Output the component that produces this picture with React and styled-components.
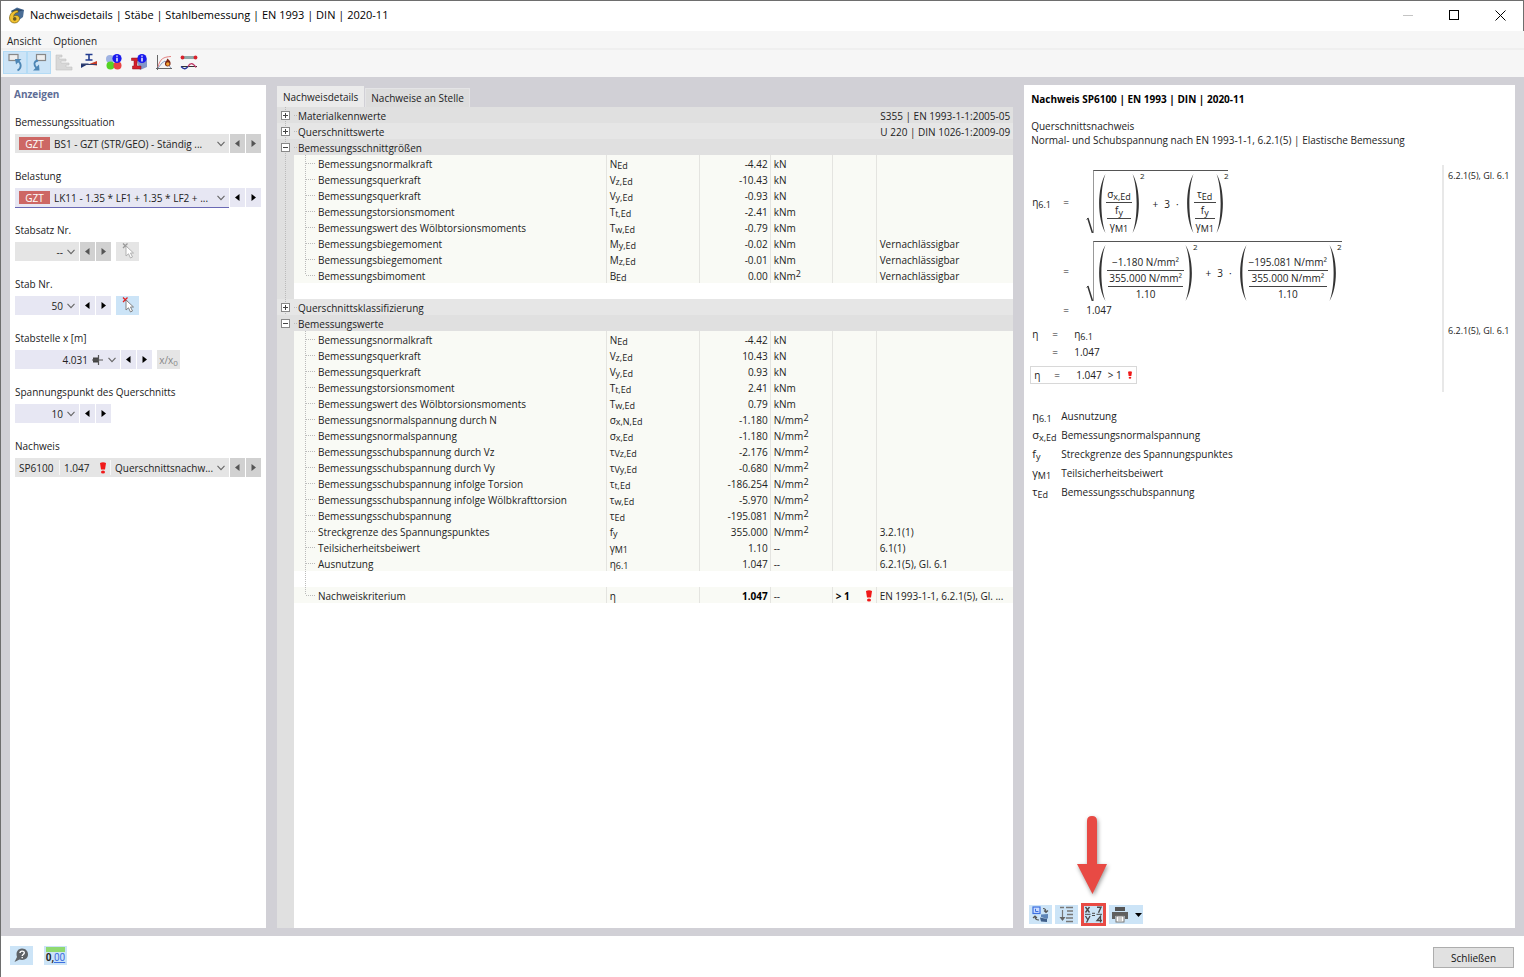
import React, { useState } from 'react';
import styled, { createGlobalStyle } from 'styled-components';

const GlobalStyle = createGlobalStyle`
    * { box-sizing: border-box; }
    body {
        margin: 0;
        background: #fff;
        color: #222;
        font-family: "Open Sans", "Noto Sans", sans-serif;
        font-size: 10px;
        line-height: 16px;
    }
    button, select, input { font: inherit; color: inherit; margin: 0; }
    button { border: 0; padding: 0; }
`;

/* ---------- icons ---------- */

const AppIcon = () => (
    <svg width="17" height="17" viewBox="0 0 17 17">
        <path d="M3 4 L9 0.5 L16 3 L15 10 L11 13 L5 8 Z" fill="#4a6d96" />
        <path d="M3 4 L9 2 L16 3 L10 5 Z" fill="#2f4b6e" />
        <path d="M10 3.5 C5 3 1.5 7 1.5 11 C1.5 14.5 4 16 6.5 16 C9.5 16 11.5 14 11.5 11.5 C11.5 8.500 8 7.500 5.500 9.500 C6 7 7.500 5.500 10 5.500 Z" fill="#f2c230" stroke="#7a6210" strokeWidth="0.7" />
        <circle cx="6.700" cy="11.900" r="1.800" fill="#6a5a20" />
    </svg>
);

const Marker = ({ size = 12 }) => (
    <svg width={size / 2} height={size} viewBox="0 0 6 12">
        <path d="M0 1 Q3 -0.500 6 1 L5 7.500 L1 7.500 Z" fill="#f01818" />
        <ellipse cx="3" cy="10" rx="2" ry="1.500" fill="#f01818" />
    </svg>
);

const Chevron = () => (
    <svg width="8" height="6" viewBox="0 0 8 6" fill="none" stroke="#666" strokeWidth="1.100">
        <path d="M0.500 0.800 L4 4.600 L7.500 0.800" />
    </svg>
);

const ArrowGlyph = ({ right }) => (
    <svg width="5" height="7" viewBox="0 0 5 7" fill="currentColor">
        <path d={right ? 'M0.500 0 L5 3.500 L0.500 7 Z' : 'M4.500 0 L0 3.500 L4.500 7 Z'} />
    </svg>
);

const PickIcon = ({ off }) => (
    <svg width="19" height="19" viewBox="0 0 19 19">
        <path d="M5 1.500 L9.500 6 M9.500 1.500 L5 6" stroke={off ? '#999' : '#e02020'} strokeWidth="1.300" />
        <path d="M8 4 L8 14 L10.500 11.800 L12.500 16 L14.500 15 L12.500 11 L15.500 11 Z" fill="#fff" stroke={off ? '#aaa' : '#777'} strokeWidth="0.900" />
    </svg>
);

const PositionIcon = () => (
    <svg width="12" height="12" viewBox="0 0 12 12">
        <rect x="1" y="3.500" width="5" height="5" fill="#444" />
        <path d="M0 6 H11 M6.500 1 V11" stroke="#555" strokeWidth="1.200" />
    </svg>
);

const BackIcon = () => (
    <svg width="20" height="20" viewBox="0 0 20 20" fill="none">
        <rect x="4" y="1.500" width="9" height="6" fill="#eee" stroke="#888" strokeWidth="1.200" />
        <path d="M12.500 17.500 C17 15 16.500 10 12.500 7.500" stroke="#4d86b5" strokeWidth="1.800" />
        <path d="M10 6 H16.500 L11 11.500 Z" fill="#4d86b5" />
    </svg>
);

const ForthIcon = () => (
    <svg width="20" height="20" viewBox="0 0 20 20" fill="none">
        <rect x="7.500" y="1.500" width="9" height="6" fill="#eee" stroke="#888" strokeWidth="1.200" />
        <path d="M9 7.500 C4.500 8.500 4.500 12 7.500 15" stroke="#4d86b5" strokeWidth="1.800" />
        <path d="M4 17.500 H10.500 L10 11.500 Z" fill="#4d86b5" />
    </svg>
);

const ListIcon = () => (
    <svg width="20" height="20" viewBox="0 0 20 20" fill="#d8d8d8" stroke="#c4c4c4" strokeWidth="0.600">
        <path d="M2 2 H8 V4 H5 V6 H12 V8 H7 V10 H15 V12 H12 V14 H18 V17 H2 Z" />
    </svg>
);

const SectionIcon = () => (
    <svg width="20" height="20" viewBox="0 0 20 20">
        <path d="M6.500 1.500 H13.500 M10 1.500 V7 M6.500 7 H13.500" stroke="#233c90" strokeWidth="1.600" />
        <path d="M2 10.500 H10 L2 15 Z" fill="#1f3470" />
        <path d="M9 11.500 L18 8 V12.500 Z" fill="#c83c28" />
        <path d="M2 11.500 H18" stroke="#33406e" />
    </svg>
);

const InfoBadge = ({ cx }) => (
    <g>
        <circle cx={cx} cy="5.500" r="4.600" fill="#1a1aee" />
        <path d={`M${cx} 2.500 V3.800 M${cx} 4.800 V8.500`} stroke="#fff" strokeWidth="1.400" />
    </g>
);

const ColoursIcon = () => (
    <svg width="20" height="20" viewBox="0 0 20 20">
        <circle cx="6" cy="6" r="4" fill="#9fb3e2" />
        <circle cx="6.500" cy="12.500" r="4" fill="#55d322" />
        <circle cx="13.500" cy="12.500" r="4" fill="#e84343" />
        <InfoBadge cx={13} />
    </svg>
);

const BeamIcon = () => (
    <svg width="20" height="20" viewBox="0 0 20 20">
        <path d="M7 6 L14 3 L18 6 V14 L11 17 Z" fill="#8498c8" />
        <path d="M2.500 5 H10 V7.500 H8 V13 H12 V16 H3.500 V13 H5 V7.500 H2.500 Z" fill="#d4202c" stroke="#8d0f19" strokeWidth="0.500" />
        <InfoBadge cx={13} />
    </svg>
);

const FireCurveIcon = () => (
    <svg width="20" height="20" viewBox="0 0 20 20" fill="none">
        <path d="M3.500 2 V17 M2 15.500 H18" stroke="#666" />
        <path d="M4 14 C6 6 9 4 17 3.500" stroke="#e58080" />
        <path d="M4 15 L8 10 L11 8 L17 15" stroke="#8aa0c4" />
        <path d="M13 5.500 C16 7 17 9 16.500 11.500 C15.500 14 11.500 14 11 11.500 C10.500 9.500 12 9 12 7.500 C12.500 8 13 7.500 13 5.500 Z" fill="#7d2a18" />
        <circle cx="13.800" cy="11" r="1.700" fill="#f5a432" />
    </svg>
);

const BucklingIcon = () => (
    <svg width="20" height="20" viewBox="0 0 20 20" fill="none">
        <path d="M3 4.500 H17" stroke="#8fa9a9" strokeWidth="3" />
        <circle cx="3.500" cy="4.500" r="1.900" fill="#d8222c" />
        <circle cx="16.500" cy="4.500" r="1.900" fill="#d8222c" />
        <path d="M2 13.500 H18" stroke="#333" />
        <path d="M2 13.500 C5 17 7 16 9 13.500" stroke="#27379a" strokeWidth="1.300" />
        <path d="M9 13.500 C11 9.500 14 9.500 17 14.500" stroke="#c03a68" strokeWidth="1.300" />
    </svg>
);

const SwapIcon = () => (
    <svg width="19" height="17" viewBox="0 0 19 17" fill="none">
        <rect x="2" y="1" width="7" height="6.500" fill="#c9dbff" stroke="#3c6fe0" strokeWidth="1.200" />
        <path d="M4.500 2.800 V5.500 H7.500" stroke="#3c6fe0" />
        <path d="M12 2.500 C14 2.500 15 3.500 15 6 M13 4.500 L15 6.500 L17 4.500" stroke="#555" strokeWidth="1.100" />
        <path d="M8 14 C5 14 4 13 4 10.500 M2 12 L4 10 L6 12" stroke="#555" strokeWidth="1.100" />
        <path d="M10 8.500 L17 8 V12 L16 13 L10 11 Z" fill="#5f86b8" />
        <path d="M9 11.500 L16 13 V16 L10 15.500 Z" fill="#3f5f8a" />
    </svg>
);

const OutlineIcon = () => (
    <svg width="19" height="17" viewBox="0 0 19 17" fill="none" stroke="#777">
        <path d="M3 1.500 H7 M9 1.500 H16 M10 5 H16 M10 8.500 H16 M9 12 H16 M9 15.500 H16" strokeWidth="1.300" />
        <path d="M5.500 4 V13" strokeWidth="1.200" />
        <path d="M2.500 11 H8.500 L5.500 15 Z" fill="#666" stroke="none" />
    </svg>
);

const FormulaIcon = () => (
    <svg width="19" height="17" viewBox="0 0 19 17" fill="none" stroke="#4a4a4a" strokeWidth="1.400">
        <path d="M1.500 1 L5.500 6.500 M5.500 1 L1.500 6.500" />
        <path d="M1.500 10 L3.700 13.500 M6 10 L2.500 16.500" />
        <path d="M1 8.300 H6.500 M8 7.300 H11 M8 9.500 H11 M12.500 8.300 H18" strokeWidth="1" />
        <path d="M13 1.300 H17 L14.500 6.800" />
        <path d="M16.500 16.500 V10.300 L13 14.500 H18" strokeWidth="1.300" />
    </svg>
);

const PrinterIcon = () => (
    <svg width="18" height="17" viewBox="0 0 18 17">
        <path d="M4 1 H14 V5 H4 Z" fill="#555" />
        <path d="M1 6 H17 V13 H14 V10 H4 V13 H1 Z" fill="#606060" />
        <rect x="5" y="10" width="8" height="6" fill="#fff" stroke="#777" />
        <path d="M7 12 H11 M7 14 H11" stroke="#999" />
    </svg>
);

const HelpIcon = () => (
    <svg width="17" height="17" viewBox="0 0 17 17">
        <path d="M1.500 15 L4 10 C2.500 5 5 1.500 9 1.500 C13 1.500 15 4.500 15 7.500 C15 11.500 11 14 6.500 12.500 Z" fill="#5e6266" />
        <path d="M7 6 C7 3.500 11.300 3.500 11.300 5.800 C11.300 7.500 9.200 7.500 9.200 9 M9.200 10 V11.300" fill="none" stroke="#fff" strokeWidth="1.400" />
    </svg>
);

const RedArrow = styled.svg`
    position: absolute;
    left: -7px;
    bottom: 29px;
    pointer-events: none;
    filter: drop-shadow(1px 2px 2px rgba(0, 0, 0, 0.4));
`;

/* ---------- window frame ---------- */

const Window = styled.div`
    min-height: 100vh;
    display: flex;
    flex-direction: column;
    border-left: 1px solid #6e6e6e;
    border-top: 1px solid #6e6e6e;
`;

const TitleBar = styled.header`
    display: flex;
    align-items: center;
    height: 30px;
    padding: 0 0 2px 7px;
    border-right: 1px solid #6e6e6e;
    color: #000;
`;

const Title = styled.h1`
    flex: 1;
    margin: 0 0 0 5px;
    font-size: 11px;
    font-weight: 400;
`;

const WindowButton = styled.button`
    display: flex;
    align-items: center;
    justify-content: center;
    width: 46px;
    height: 28px;
    background: none;
    color: ${props => props.$muted ? '#c4c4c4' : '#000'};
`;

const MenuBar = styled.nav`
    display: flex;
    gap: 12px;
    height: 19px;
    padding: 0 6px;
    background: #f6f6f6;
    border-bottom: 2px solid #efefef;
`;

const MenuItem = styled.button`
    height: 20px;
    background: none;
    color: #222;
`;

const ToolBar = styled.div`
    display: flex;
    align-items: center;
    height: 27px;
    padding: 0 2px 2px;
    background: #f6f6f6;
`;

const ToolButton = styled.button`
    display: flex;
    align-items: center;
    justify-content: center;
    width: ${props => props.$active ? '24px' : '25px'};
    height: 23px;
    background: ${props => props.$active ? '#cce4f7' : 'none'};
    border: 1px solid ${props => props.$active ? '#b4dbf5' : 'transparent'};
`;

const Workspace = styled.main`
    flex: 1;
    display: grid;
    grid-template-columns: 256px minmax(0, 3fr) minmax(0, 2fr);
    gap: 11px;
    padding: 8px 9px;
    background: #d1d0d6;
`;

const Panel = styled.section`
    display: flex;
    flex-direction: column;
    background: #fff;
    min-width: 0;
`;

const Footer = styled.footer`
    display: flex;
    align-items: center;
    height: 41px;
    padding: 0 10px 2px 9px;
    background: #fff;
`;

const FooterButton = styled.button`
    display: flex;
    align-items: center;
    justify-content: center;
    width: 23px;
    height: 19px;
    margin-right: 11px;
    background: #cce4f7;
`;

const UnitsMark = styled.span`
    border-top: 5px solid #8fd970;
    font: 700 10px/12px Roboto, sans-serif;
    color: #222;

    em {
        font-style: normal;
        font-weight: 400;
        color: #3c6fe0;
        text-decoration: underline;
    }
`;

const CloseButton = styled.button`
    width: 81px;
    height: 21px;
    margin: 4px 0 0 auto;
    background: #e1e1e1;
    border: 1px solid #adadad;
    color: #111;
`;

/* ---------- left column ---------- */

const PanelHeading = styled.h2`
    margin: 1px 0 12px 4px;
    font-size: 10px;
    color: #5e6d96;
`;

const Field = styled.div`
    height: 54px;
    padding: 0 5px;
`;

const FieldLabel = styled.label`
    display: block;
    margin-bottom: 4px;
`;

const FieldRow = styled.div`
    display: flex;
    gap: 1px;
    height: 19px;
`;

const Combo = styled.div`
    display: flex;
    align-items: center;
    gap: 4px;
    flex: ${props => props.$width ? 'none' : '1'};
    width: ${props => props.$width || 'auto'};
    min-width: 0;
    padding: 0 4px;
    background: ${props => props.$off ? '#e5e5e5' : '#e7e7f3'};
    box-shadow: ${props => props.$focused ? '0 1px 0 #6a69b4' : 'none'};

    svg { flex: none; }
`;

const Picker = styled.select`
    flex: 1;
    min-width: 0;
    height: 19px;
    padding: 0;
    border: 0;
    outline: 0;
    appearance: none;
    background: none;
    text-align-last: ${props => props.$right ? 'right' : 'left'};
    opacity: 1;
`;

const Badge = styled.span`
    flex: none;
    width: 31px;
    height: 13px;
    background: #cd6764;
    color: #fff;
    line-height: 14px;
    text-align: center;
`;

const ComboPart = styled.span`
    display: flex;
    align-items: center;
    justify-content: space-between;
    flex: none;
    width: ${props => props.$width};
    height: 15px;
    padding-right: 4px;
    border-right: 1px solid #f6f6f6;
`;

const StepButton = styled.button`
    display: flex;
    align-items: center;
    justify-content: center;
    width: 15px;
    background: ${props => props.disabled ? '#d1d1d1' : '#e7e7f3'};
    color: ${props => props.disabled ? '#555' : '#000'};
`;

const SideButton = styled.button`
    display: flex;
    align-items: center;
    justify-content: center;
    width: 23px;
    margin-left: 4px;
    background: ${props => props.disabled ? '#e5e5e5' : '#cce4f7'};
    color: #888;

    sub { font-size: 8px; line-height: 8px; padding-top: 6px; }
`;

/* ---------- middle column ---------- */

const Middle = styled.section`
    display: flex;
    flex-direction: column;
    min-width: 0;
`;

const Tabs = styled.div`
    display: flex;
    align-items: flex-end;
    gap: 1px;
    height: 22px;
`;

const Tab = styled.button`
    height: ${props => props.$active ? '21px' : '19px'};
    padding: 0 5px;
    background: ${props => props.$active ? '#ebebeb' : '#dddddd'};
    border: 1px solid ${props => props.$active ? '#ebebeb' : '#e4e4e6'};
    border-bottom: 0;
`;

const TreeArea = styled.div`
    flex: 1;
    background: linear-gradient(to right, #e0e0e0 17px, #fff 17px);
`;

const Tree = styled.table`
    width: 100%;
    table-layout: fixed;
    border-collapse: collapse;

    td, th {
        height: 16px;
        padding: 2px 3px 0;
        font-weight: 400;
        text-align: left;
        white-space: nowrap;
        line-height: 14px;
    }
`;

const GroupRow = styled.tr`
    background: ${props => props.$light ? '#e6e6e6' : '#e0e0e0'};
`;

const dots = dir => `repeating-linear-gradient(${dir}, #bbb 0 1px, transparent 1px 2px)`;

const Gutter = styled.td`
    && {
        padding: 0 0 0 4px;
        background: ${props => props.$line ? dots('to bottom') : 'none'} 8px 0 / 1px 16px no-repeat;
    }
`;

const GroupName = styled.th`
    && { padding-left: 4px; background: ${dots('to right')} 0 8px / 3px 1px no-repeat; }
`;

const Expander = styled.button`
    display: block;
    width: 9px;
    height: 9px;
    border: 1px solid #888;
    background:
        linear-gradient(#444, #444) center / 5px 1px no-repeat,
        linear-gradient(#444, #444) center / ${props => props.$open ? '0 0' : '1px 5px'} no-repeat,
        #fff;
`;

const DataRow = styled.tr`
    td, th { background-color: #f9faf5; }
    td:nth-child(n + 3) { border-left: 1px solid #e4e4e0; }
    td:first-child { background-color: #e0e0e0; }
`;

const BlankRow = styled.tr`
    td { background-color: #fff; }
    td:first-child { background-color: #e0e0e0; }
`;

const NameCell = styled.th`
    && {
        padding-left: 24px;
        background-image: ${dots('to bottom')}, ${dots('to right')};
        background-position: 11px 0, 12px 8px;
        background-size: 1px ${props => props.$last ? '8px' : '16px'}, 9px 1px;
        background-repeat: no-repeat;
    }
`;

const BlankName = styled.td`
    && {
        background-image: ${props => props.$line ? dots('to bottom') : 'none'};
        background-position: 11px 0;
        background-size: 1px 16px;
        background-repeat: no-repeat;
    }
`;

const NumberCell = styled.td`
    && { text-align: right; padding-right: 2px; font-weight: ${props => props.$bold ? 700 : 400}; color: ${props => props.$bold ? '#000' : '#222'}; }
`;

const StateCell = styled.td`
    && { font-weight: 700; }
    color: #000;

    svg { float: right; margin: 1px 1px 0 0; }
`;

const RightCell = styled.td`
    && { text-align: right; }
`;

const Low = styled.sub`
    font-size: 9px;
    line-height: 1px;
    vertical-align: -1px;
`;

const High = styled.sup`
    font-size: 9px;
    line-height: 1px;
    vertical-align: 3px;
`;

/* ---------- right column ---------- */

const SheetTitle = styled.h2`
    margin: 6px 7px 12px;
    font-size: 10px;
    color: #000;
`;

const SheetText = styled.p`
    margin: 0 7px;
    line-height: 14px;
`;

const Proof = styled.div`
    display: grid;
    grid-template-columns: minmax(0, 1fr) 73px;
    margin-top: 18px;
    color: #222;
`;

const Steps = styled.div`
    padding: 5px 0 1px 8px;
    min-width: 0;
`;

const Reference = styled.div`
    padding: 3px 0 0 4px;
    border-left: 2px solid #e8e8e8;
    font-size: 9px;
    white-space: nowrap;
`;

const Equation = styled.div`
    display: grid;
    grid-template-columns: ${props => props.$narrow ? '20px 22px' : '31px 23px'} 1fr;
    align-items: center;
    min-height: 18px;
    margin-bottom: ${props => props.$gap || '0'};
`;

const ResultBox = styled.div`
    display: inline-grid;
    grid-template-columns: 20px 22px auto;
    align-items: center;
    margin: 5px 0 7px -2px;
    padding: 0 4px 0 3px;
    border: 1px solid #d8d8d8;
`;

const Result = styled.span`
    display: flex;
    align-items: center;
    gap: 6px;
`;

const Small = styled.sub`
    font-size: 9px;
    line-height: 1px;
    vertical-align: -2px;
`;

const RootBox = styled.span`
    display: flex;
    align-items: flex-end;
`;

const RootBody = styled.span`
    display: flex;
    align-items: stretch;
    padding: 3px 0 0 5px;
    border-top: 1px solid #555;
    border-left: 1px solid #999;
`;

const Exponent = styled.span`
    margin-left: 1px;
    font-size: 8px;
    line-height: 4px;
`;

const Operator = styled.span`
    display: flex;
    gap: 6px;
    align-self: center;
    padding: 0 8px;
`;

const Fraction = styled.span`
    display: flex;
    flex-direction: column;
    align-items: center;
    justify-content: flex-end;
    padding: ${props => props.$wide ? '10px 1px 0' : '13px 0 0'};
    line-height: 14px;
`;

const Denominator = styled.span`
    display: flex;
    flex-direction: column;
    align-items: center;
    align-self: stretch;
    padding: 0 1px;
    border-top: 1px solid #444;
    white-space: nowrap;
`;

const Numerator = styled.span`
    padding: 0 1px 1px;
    white-space: nowrap;
`;

const Legend = styled.dl`
    display: grid;
    grid-template-columns: 29px 1fr;
    grid-auto-rows: 19px;
    align-items: center;
    margin: 14px 8px auto;

    dt { font-size: 11px; }
    dd { margin: 0; }
`;

const SheetTools = styled.div`
    display: flex;
    align-items: center;
    gap: 3px;
    padding: 0 5px 2px;
`;

const SheetButton = styled.button`
    position: relative;
    display: flex;
    align-items: center;
    justify-content: center;
    gap: 6px;
    width: ${props => props.$width || '23px'};
    height: ${props => props.$marked ? '23px' : '19px'};
    background: #cce4f7;
    border: ${props => props.$marked ? '3px solid #e84a44' : '0'};
`;

/* ---------- data ---------- */

const mm2 = <>N/mm<High>2</High></>;

const internalForces = [
    ['Bemessungsnormalkraft', 'N', 'Ed', '-4.42', 'kN'],
    ['Bemessungsquerkraft', 'V', 'z,Ed', '-10.43', 'kN'],
    ['Bemessungsquerkraft', 'V', 'y,Ed', '-0.93', 'kN'],
    ['Bemessungstorsionsmoment', 'T', 't,Ed', '-2.41', 'kNm'],
    ['Bemessungswert des Wölbtorsionsmoments', 'T', 'w,Ed', '-0.79', 'kNm'],
    ['Bemessungsbiegemoment', 'M', 'y,Ed', '-0.02', 'kNm', 'Vernachlässigbar'],
    ['Bemessungsbiegemoment', 'M', 'z,Ed', '-0.01', 'kNm', 'Vernachlässigbar'],
    ['Bemessungsbimoment', 'B', 'Ed', '0.00', <>kNm<High>2</High></>, 'Vernachlässigbar'],
];

const designValues = [
    ['Bemessungsnormalkraft', 'N', 'Ed', '-4.42', 'kN'],
    ['Bemessungsquerkraft', 'V', 'z,Ed', '10.43', 'kN'],
    ['Bemessungsquerkraft', 'V', 'y,Ed', '0.93', 'kN'],
    ['Bemessungstorsionsmoment', 'T', 't,Ed', '2.41', 'kNm'],
    ['Bemessungswert des Wölbtorsionsmoments', 'T', 'w,Ed', '0.79', 'kNm'],
    ['Bemessungsnormalspannung durch N', 'σ', 'x,N,Ed', '-1.180', mm2],
    ['Bemessungsnormalspannung', 'σ', 'x,Ed', '-1.180', mm2],
    ['Bemessungsschubspannung durch Vz', 'τ', 'Vz,Ed', '-2.176', mm2],
    ['Bemessungsschubspannung durch Vy', 'τ', 'Vy,Ed', '-0.680', mm2],
    ['Bemessungsschubspannung infolge Torsion', 'τ', 't,Ed', '-186.254', mm2],
    ['Bemessungsschubspannung infolge Wölbkrafttorsion', 'τ', 'w,Ed', '-5.970', mm2],
    ['Bemessungsschubspannung', 'τ', 'Ed', '-195.081', mm2],
    ['Streckgrenze des Spannungspunktes', 'f', 'y', '355.000', mm2, '3.2.1(1)'],
    ['Teilsicherheitsbeiwert', 'γ', 'M1', '1.10', '--', '6.1(1)'],
    ['Ausnutzung', 'η', '6.1', '1.047', '--', '6.2.1(5), Gl. 6.1'],
];

const legend = [
    ['η', '6.1', 'Ausnutzung'],
    ['σ', 'x,Ed', 'Bemessungsnormalspannung'],
    ['f', 'y', 'Streckgrenze des Spannungspunktes'],
    ['γ', 'M1', 'Teilsicherheitsbeiwert'],
    ['τ', 'Ed', 'Bemessungsschubspannung'],
];

const tools = [
    ['Zurück', BackIcon, true],
    ['Vor', ForthIcon, true],
    ['Liste', ListIcon],
    ['Querschnitt', SectionIcon],
    ['Farben', ColoursIcon],
    ['Stabinfo', BeamIcon],
    ['Brandkurve', FireCurveIcon],
    ['Knickfigur', BucklingIcon],
];

/* ---------- pieces ---------- */

const Steppers = ({ off, name }) => (
    <>
        <StepButton disabled={off} aria-label={`${name} zurück`}><ArrowGlyph /></StepButton>
        <StepButton disabled={off} aria-label={`${name} weiter`}><ArrowGlyph right /></StepButton>
    </>
);

const ChoiceField = ({ id, label, value, width, off, focused, before, icon, side }) => (
    <Field>
        <FieldLabel htmlFor={id}>{label}</FieldLabel>
        <FieldRow>
            <Combo $width={width} $off={off} $focused={focused}>
                {before}
                <Picker id={id} $right={!!width} defaultValue={value}>
                    <option>{value}</option>
                </Picker>
                {icon}
                <Chevron />
            </Combo>
            <Steppers off={off} name={label} />
            {side}
        </FieldRow>
    </Field>
);

const Group = ({ title, info, light, line, open, onToggle }) => (
    <GroupRow $light={light}>
        <Gutter $line={line}>
            <Expander $open={open} onClick={onToggle} aria-label={title} />
        </Gutter>
        <GroupName colSpan={info ? 2 : 6}>{title}</GroupName>
        {info && <RightCell colSpan={4}>{info}</RightCell>}
    </GroupRow>
);

const ValueRow = ({ row, line, last }) => {
    const [name, base, low, value, unit, note] = row;
    return (
        <DataRow>
            <Gutter $line={line} />
            <NameCell scope="row" $last={last}>{name}</NameCell>
            <td>{base}<Low>{low}</Low></td>
            <NumberCell>{value}</NumberCell>
            <td>{unit}</td>
            <td />
            <td>{note}</td>
        </DataRow>
    );
};

const Paren = ({ right }) => (
    <svg width="7" viewBox="0 0 7 50" preserveAspectRatio="none" fill="#333">
        <path d={right
            ? 'M0.500 0 C9 12 9 38 0.500 50 C6 38 6 12 0.500 0 Z'
            : 'M6.500 0 C-2 12 -2 38 6.500 50 C1 38 1 12 6.500 0 Z'}
        />
    </svg>
);

const ParenBox = styled.span`
    display: flex;
    align-items: stretch;

    > svg { height: auto; }
`;

const Root = ({ children }) => (
    <RootBox>
        <svg width="7" height="16" viewBox="0 0 7 16" fill="none" stroke="#333">
            <path d="M0.500 2.500 L2 1" strokeWidth="0.800" />
            <path d="M1.800 1 L6.500 16" strokeWidth="1.500" />
        </svg>
        <RootBody>{children}</RootBody>
    </RootBox>
);

const Squared = ({ top, middle, bottom, wide }) => (
    <>
        <ParenBox>
            <Paren />
            <Fraction $wide={wide}>
                <Numerator>{top}</Numerator>
                <Denominator>
                    <Numerator>{middle}</Numerator>
                    <Denominator>{bottom}</Denominator>
                </Denominator>
            </Fraction>
            <Paren right />
        </ParenBox>
        <Exponent>2</Exponent>
    </>
);

const PlusThree = () => (
    <Operator><span>+</span><span>3</span><span>·</span></Operator>
);

const Details = () => {
    const [open, setOpen] = useState({ forces: true, values: true });
    const toggle = key => setOpen({ ...open, [key]: !open[key] });

    return (
        <TreeArea>
            <Tree>
                <colgroup>
                    <col style={{ width: 17 }} />
                    <col />
                    <col style={{ width: 93 }} />
                    <col style={{ width: 71 }} />
                    <col style={{ width: 62 }} />
                    <col style={{ width: 44 }} />
                    <col style={{ width: 137 }} />
                </colgroup>
                <tbody>
                    <Group title="Materialkennwerte" info="S355 | EN 1993-1-1:2005-05" line />
                    <Group title="Querschnittswerte" info="U 220 | DIN 1026-1:2009-09" light line />
                    <Group title="Bemessungsschnittgrößen" line open={open.forces} onToggle={() => toggle('forces')} />
                    {open.forces && internalForces.map((row, i) => (
                        <ValueRow key={i} row={row} line last={i === internalForces.length - 1} />
                    ))}
                    <BlankRow><Gutter $line /><td colSpan={6} /></BlankRow>
                    <Group title="Querschnittsklassifizierung" light line />
                    <Group title="Bemessungswerte" open={open.values} onToggle={() => toggle('values')} />
                    {open.values && designValues.map((row, i) => <ValueRow key={i} row={row} />)}
                    <BlankRow><Gutter /><BlankName $line colSpan={6} /></BlankRow>
                    <DataRow>
                        <Gutter />
                        <NameCell scope="row" $last>Nachweiskriterium</NameCell>
                        <td>η</td>
                        <NumberCell $bold>1.047</NumberCell>
                        <td>--</td>
                        <StateCell>&gt; 1 <Marker /></StateCell>
                        <td>EN 1993-1-1, 6.2.1(5), Gl. ...</td>
                    </DataRow>
                </tbody>
            </Tree>
        </TreeArea>
    );
};

const eta = <>η<Small>6.1</Small></>;
const fy = <>f<Small>y</Small></>;
const gamma = <span>γ<Small>M1</Small></span>;

const Sheet = () => (
    <Panel>
        <SheetTitle>Nachweis SP6100 | EN 1993 | DIN | 2020-11</SheetTitle>
        <SheetText>Querschnittsnachweis</SheetText>
        <SheetText>Normal- und Schubspannung nach EN 1993-1-1, 6.2.1(5) | Elastische Bemessung</SheetText>
        <Proof>
            <Steps>
                <Equation $gap="8px">
                    <span>{eta}</span>
                    <span>=</span>
                    <Root>
                        <Squared top={<>σ<Small>x,Ed</Small></>} middle={fy} bottom={gamma} />
                        <PlusThree />
                        <Squared top={<>τ<Small>Ed</Small></>} middle={fy} bottom={gamma} />
                    </Root>
                </Equation>
                <Equation>
                    <span />
                    <span>=</span>
                    <Root>
                        <Squared wide top="−1.180 N/mm²" middle="355.000 N/mm²" bottom="1.10" />
                        <PlusThree />
                        <Squared wide top="−195.081 N/mm²" middle="355.000 N/mm²" bottom="1.10" />
                    </Root>
                </Equation>
                <Equation>
                    <span />
                    <span>=</span>
                    <span>1.047</span>
                </Equation>
            </Steps>
            <Reference>6.2.1(5), Gl. 6.1</Reference>
            <Steps>
                <Equation $narrow><span>η</span><span>=</span><span>{eta}</span></Equation>
                <Equation $narrow><span /><span>=</span><span>1.047</span></Equation>
                <ResultBox>
                    <span>η</span>
                    <span>=</span>
                    <Result>1.047 <span>&gt; 1</span> <Marker size={8} /></Result>
                </ResultBox>
            </Steps>
            <Reference>6.2.1(5), Gl. 6.1</Reference>
        </Proof>
        <Legend>
            {legend.map(([base, low, text]) => (
                <React.Fragment key={text}>
                    <dt>{base}<Small>{low}</Small></dt>
                    <dd>{text}</dd>
                </React.Fragment>
            ))}
        </Legend>
        <SheetTools>
            <SheetButton aria-label="Tauschen"><SwapIcon /></SheetButton>
            <SheetButton aria-label="Gliederung"><OutlineIcon /></SheetButton>
            <SheetButton $marked $width="25px" aria-label="Formel">
                <FormulaIcon />
                <RedArrow width="30" height="78" viewBox="0 0 30 78">
                    <path d="M10 5 Q10 0 15 0 Q20 0 20 5 V48 H30 L15.500 78 L0 48 H10 Z" fill="#e84a44" />
                </RedArrow>
            </SheetButton>
            <SheetButton $width="34px" aria-label="Drucken">
                <PrinterIcon />
                <svg width="7" height="4" viewBox="0 0 7 4"><path d="M0 0 H7 L3.500 4 Z" /></svg>
            </SheetButton>
        </SheetTools>
    </Panel>
);

const App = () => {
    const [tab, setTab] = useState('details');

    return (
        <Window>
            <GlobalStyle />
            <TitleBar>
                <AppIcon />
                <Title>Nachweisdetails | Stäbe | Stahlbemessung | EN 1993 | DIN | 2020-11</Title>
                <WindowButton $muted aria-label="Minimieren">
                    <svg width="12" height="11" viewBox="0 0 12 11" stroke="currentColor"><path d="M1 5.500 H11" /></svg>
                </WindowButton>
                <WindowButton aria-label="Maximieren">
                    <svg width="11" height="11" viewBox="0 0 11 11" fill="none" stroke="currentColor"><rect x="0.500" y="0.500" width="9" height="9" /></svg>
                </WindowButton>
                <WindowButton aria-label="Fenster schließen">
                    <svg width="11" height="11" viewBox="0 0 11 11" stroke="currentColor"><path d="M0.500 0.500 L10.500 10.500 M10.500 0.500 L0.500 10.500" /></svg>
                </WindowButton>
            </TitleBar>
            <MenuBar>
                <MenuItem>Ansicht</MenuItem>
                <MenuItem>Optionen</MenuItem>
            </MenuBar>
            <ToolBar>
                {tools.map(([name, Icon, active]) => (
                    <ToolButton key={name} aria-label={name} $active={active}><Icon /></ToolButton>
                ))}
            </ToolBar>
            <Workspace>
                <Panel>
                    <PanelHeading>Anzeigen</PanelHeading>
                    <ChoiceField id="situation" label="Bemessungssituation" off before={<Badge>GZT</Badge>} value="BS1 - GZT (STR/GEO) - Ständig ..." />
                    <ChoiceField id="load" label="Belastung" focused before={<Badge>GZT</Badge>} value="LK11 - 1.35 * LF1 + 1.35 * LF2 + ..." />
                    <ChoiceField id="set" label="Stabsatz Nr." width="64px" off value="--" side={<SideButton disabled aria-label="Stabsatz wählen"><PickIcon off /></SideButton>} />
                    <ChoiceField id="member" label="Stab Nr." width="64px" value="50" side={<SideButton aria-label="Stab wählen"><PickIcon /></SideButton>} />
                    <ChoiceField id="place" label="Stabstelle x [m]" width="105px" value="4.031" icon={<PositionIcon />} side={<SideButton disabled>x/x<sub>0</sub></SideButton>} />
                    <ChoiceField id="point" label="Spannungspunkt des Querschnitts" width="64px" value="10" />
                    <ChoiceField
                        id="check"
                        label="Nachweis"
                        off
                        before={<><ComboPart $width="41px">SP6100</ComboPart><ComboPart $width="47px">1.047 <Marker /></ComboPart></>}
                        value="Querschnittsnachw..."
                    />
                </Panel>
                <Middle>
                    <Tabs role="tablist">
                        <Tab role="tab" $active={tab === 'details'} onClick={() => setTab('details')}>Nachweisdetails</Tab>
                        <Tab role="tab" $active={tab === 'place'} onClick={() => setTab('place')}>Nachweise an Stelle</Tab>
                    </Tabs>
                    <Details />
                </Middle>
                <Sheet />
            </Workspace>
            <Footer>
                <FooterButton aria-label="Hilfe"><HelpIcon /></FooterButton>
                <FooterButton aria-label="Einheiten"><UnitsMark>0,<em>00</em></UnitsMark></FooterButton>
                <CloseButton>Schließen</CloseButton>
            </Footer>
        </Window>
    );
};

export default App;
